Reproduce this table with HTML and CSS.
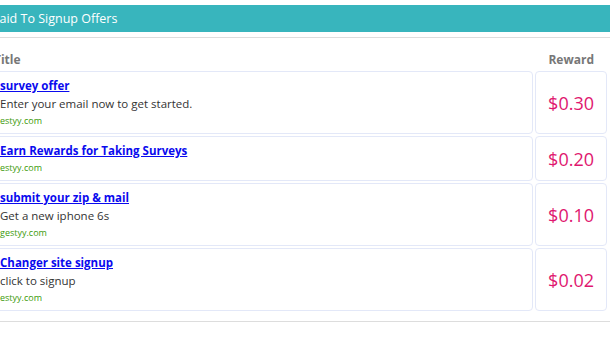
FILE: index.html
```html
<!DOCTYPE html>
<html lang="en">
<head>
    <meta charset="UTF-8">
    <meta name="viewport" content="width=device-width, initial-scale=1.0">
    <title>Paid To Signup Offers</title>
    <link rel="stylesheet" href="styles.css">
</head>
<body>
    <div class="panel">
        <div class="panel-heading">Paid To Signup Offers</div>
        <div class="panel-body">
            <table class="offers">
                <thead>
                    <tr>
                        <th>Title</th>
                        <th class="reward">Reward</th>
                    </tr>
                </thead>
                <tbody>
                    <tr>
                        <td>
                            <a href="#" class="offer-title">survey offer</a>
                            <div class="offer-desc">Enter your email now to get started.</div>
                            <div class="offer-site">estyy.com</div>
                        </td>
                        <td class="reward">$0.30</td>
                    </tr>
                    <tr>
                        <td>
                            <a href="#" class="offer-title">Earn Rewards for Taking Surveys</a>
                            <div class="offer-site">estyy.com</div>
                        </td>
                        <td class="reward">$0.20</td>
                    </tr>
                    <tr>
                        <td>
                            <a href="#" class="offer-title">submit your zip &amp; mail</a>
                            <div class="offer-desc">Get a new iphone 6s</div>
                            <div class="offer-site">gestyy.com</div>
                        </td>
                        <td class="reward">$0.10</td>
                    </tr>
                    <tr>
                        <td>
                            <a href="#" class="offer-title">Changer site signup</a>
                            <div class="offer-desc">click to signup</div>
                            <div class="offer-site">estyy.com</div>
                        </td>
                        <td class="reward">$0.02</td>
                    </tr>
                </tbody>
            </table>
        </div>
    </div>
</body>
</html>
```

FILE: styles.css
```css
body {
    font-family: "Open Sans", "Liberation Sans", sans-serif;
    background-color: #fff;
    margin: 0;
    overflow: hidden;
}
.panel {
    margin: 5px 0 0 -14px;
}
.panel-heading {
    background-color: #38b5bd;
    color: #fff;
    font-size: 12.5px;
    height: 27px;
    line-height: 27px;
    padding: 0 6px;
}
.panel-body {
    margin-top: 5px;
    border-top: 1px solid #ddd;
    border-bottom: 1px solid #ddd;
    padding: 0 1px 8px 0;
}
.offers {
    width: 100%;
    border-spacing: 2px;
}
.offers th,
.offers td {
    border: 1px solid #e3e8f8;
    border-radius: 4px;
    text-align: left;
}
.offers th {
    border-color: transparent;
    color: #777;
    font-size: 12px;
    font-weight: bold;
    line-height: 17px;
    padding: 10px 12px 0 5px;
}
.offers td {
    padding: 5px 8px 4px 11px;
    vertical-align: middle;
}
.offers .reward {
    width: 46px;
    text-align: right;
    padding-left: 12px;
    padding-right: 12px;
}
.offers td.reward {
    color: #e0176f;
    font-size: 18px;
}
.offer-title {
    display: block;
    color: #0a0aee;
    font-size: 11.5px;
    font-weight: bold;
    line-height: 18px;
}
.offer-desc {
    color: #333;
    font-size: 11.5px;
    line-height: 18px;
}
.offer-site {
    color: #3c9a0a;
    font-size: 9px;
    line-height: 16px;
}
```
